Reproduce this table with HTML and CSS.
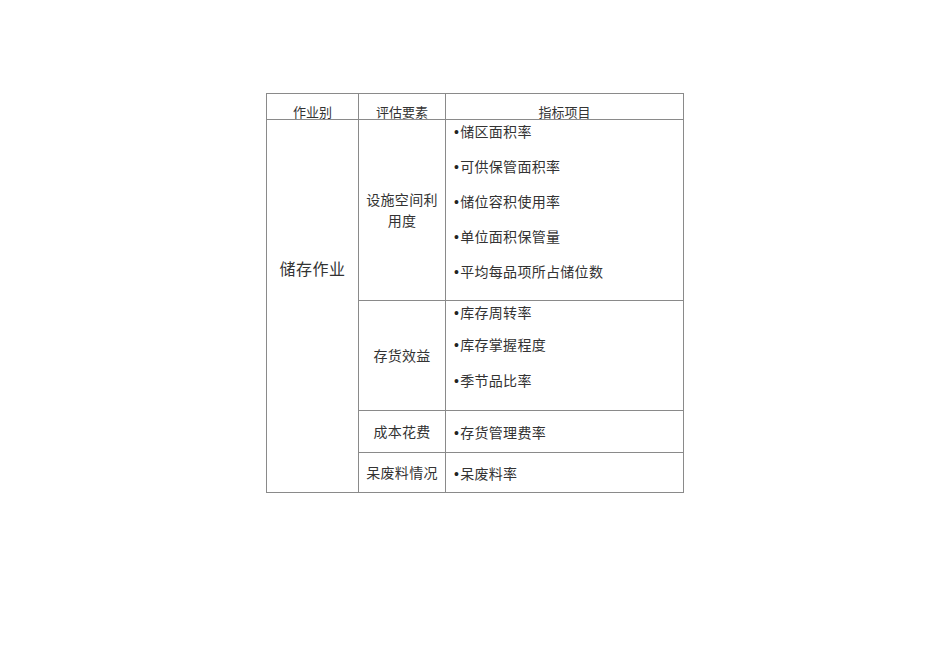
FILE: index.html
```html
<!DOCTYPE html>
<html lang="zh-CN">
<head>
<meta charset="utf-8">
<title>储存作业评估</title>
<link rel="stylesheet" href="styles.css">
</head>
<body>
<div class="page">
  <div class="sheet">
    <div class="cell head">作业别</div>
    <div class="cell head">评估要素</div>
    <div class="cell head">指标项目</div>

    <div class="cell op">储存作业</div>

    <div class="cell factor">设施空间利<br>用度</div>
    <div class="cell items items-a">
      <div class="item">储区面积率</div>
      <div class="item">可供保管面积率</div>
      <div class="item">储位容积使用率</div>
      <div class="item">单位面积保管量</div>
      <div class="item">平均每品项所占储位数</div>
    </div>

    <div class="cell factor">存货效益</div>
    <div class="cell items items-b">
      <div class="item">库存周转率</div>
      <div class="item">库存掌握程度</div>
      <div class="item">季节品比率</div>
    </div>

    <div class="cell factor">成本花费</div>
    <div class="cell items items-c">
      <div class="item">存货管理费率</div>
    </div>

    <div class="cell factor">呆废料情况</div>
    <div class="cell items items-c">
      <div class="item">呆废料率</div>
    </div>
  </div>
</div>
</body>
</html>
```

FILE: styles.css
```css
html, body {
  margin: 0;
  padding: 0;
  background: #ffffff;
}

.page {
  padding: 93px 0 0 266px;
  font-family: "Noto Sans CJK SC", "Noto Sans", sans-serif;
  color: #333333;
}

.sheet {
  display: grid;
  grid-template-columns: 91px 86px 237px;
  grid-template-rows: 25px 180px 109px 41px 39px;
  gap: 1px;
  padding: 1px;
  background: #8a8a8a;
  width: max-content;
}

.cell {
  background: #ffffff;
  display: flex;
}

.head {
  font-size: 13px;
  line-height: 15px;
  align-items: flex-end;
  justify-content: center;
}

.op {
  grid-row: 2 / span 4;
  font-size: 16px;
  line-height: 20px;
  align-items: center;
  justify-content: center;
  padding-bottom: 76px;
  letter-spacing: 0.5px;
}

.factor {
  font-size: 14px;
  line-height: 21px;
  align-items: center;
  justify-content: center;
  text-align: center;
  letter-spacing: 0.3px;
}

.items {
  flex-direction: column;
  padding-left: 8px;
  font-size: 14px;
  line-height: 20px;
  letter-spacing: 0.3px;
}

.item {
  height: 20px;
  display: flex;
  align-items: center;
  white-space: nowrap;
}

.item::before {
  content: "\2022";
  font-family: "Liberation Sans", sans-serif;
  font-size: 14px;
  line-height: 20px;
  margin: 2px 1px 0 0;
  color: #222222;
}

.items-a {
  padding-top: 1px;
  gap: 15px;
}

.items-b {
  padding-top: 1px;
}

.items-b .item:nth-child(2) {
  margin-top: 12px;
}

.items-b .item:nth-child(3) {
  margin-top: 16px;
}

.items-c {
  justify-content: center;
}
```
